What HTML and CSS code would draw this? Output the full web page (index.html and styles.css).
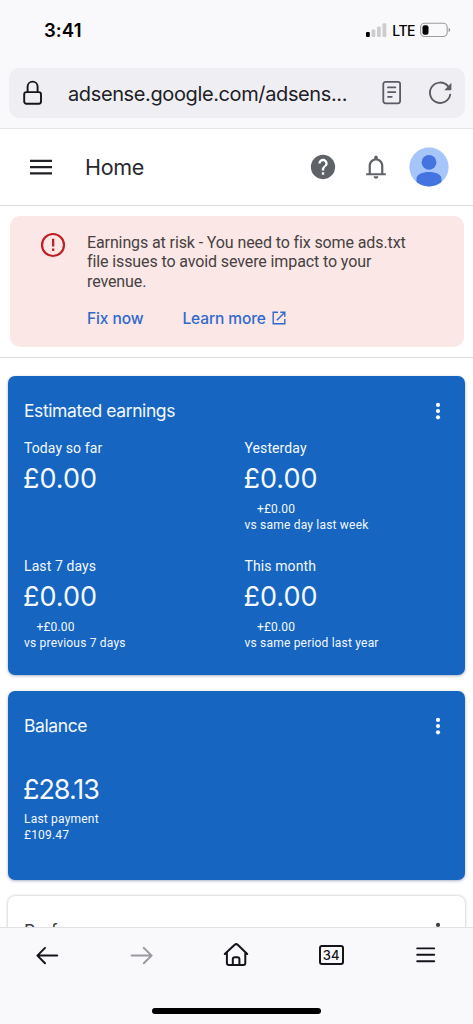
FILE: index.html
```html
<!DOCTYPE html>
<html lang="en">
<head>
<meta charset="utf-8">
<meta name="viewport" content="width=device-width, initial-scale=1">
<title>Home - AdSense</title>
<link rel="stylesheet" href="styles.css">
</head>
<body>
<div class="screen">
  <div class="chrome">
    <div class="status">
      <span class="time">3:41</span>
      <div class="signals">
        <svg width="22" height="16" viewBox="0 0 22 16"><rect x="1" y="10" width="3.8" height="5" rx="1"/><g fill="#cdcdd0"><rect x="6.5" y="7.5" width="3.8" height="7.5" rx="1"/><rect x="12" y="4.5" width="3.8" height="10.5" rx="1"/><rect x="17.5" y="1.2" width="3.8" height="13.8" rx="1"/></g></svg>
        <span class="lte">LTE</span>
        <svg width="31" height="16" viewBox="0 0 31 16"><rect x=".6" y="1.3" width="26.6" height="13.2" rx="4" fill="none" stroke="#9d9da0" stroke-width="1.1"/><rect x="2.5" y="3.2" width="6" height="9.6" rx="2"/><path d="M28.7 5.8v4.2q1.5-.8 1.5-2.1t-1.5-2.1z" fill="#8c8c90"/></svg>
      </div>
    </div>
    <div class="urlbar">
      <svg class="lock" width="20" height="26" viewBox="0 0 20 26" fill="none" stroke="#15141a" stroke-width="1.9"><rect x="1.2" y="12.1" width="16.8" height="11.6" rx="2.2"/><path d="M4.6 12V6.6a5 5 0 0 1 10 0V12"/></svg>
      <span class="url">adsense.google.com/adsens...</span>
      <svg class="reader" width="20" height="26" viewBox="0 0 20 26" fill="none" stroke="#5b5b66" stroke-width="1.8" stroke-linecap="round"><rect x="1.3" y="1.9" width="16.8" height="21.4" rx="2.2"/><path d="M6 7.4h7.3M6 12.1h7.3M6 16.8h3.8"/></svg>
      <svg class="reload" width="26" height="26" viewBox="0 0 26 26"><path d="M23.2 14.6A10.2 10.2 0 1 1 20.8 6" fill="none" stroke="#5b5b66" stroke-width="1.9" stroke-linecap="round"/><path d="M24.4 2.8v6.6q0 .8-.8.8h-6.3z" fill="#5b5b66"/></svg>
    </div>
  </div>

  <header class="appbar">
    <svg class="menu" width="24" height="18" viewBox="0 0 24 18" stroke="#202124" stroke-width="2.2"><path d="M1 2.8h22M1 9.1h22M1 15.4h22"/></svg>
    <h1>Home</h1>
    <svg class="help" width="28" height="28" viewBox="0 0 24 24" fill="#5f6368"><path d="M12 1.6a10.4 10.4 0 1 0 0 20.8 10.4 10.4 0 0 0 0-20.8zm1 17h-2v-2h2zm2.1-7.75-.9.92c-.72.73-1.2 1.33-1.2 3.23h-2v-.5c0-1.1.45-2.1 1.17-2.83l1.24-1.26A2 2 0 1 0 10 9H8a4 4 0 1 1 8 0c0 .88-.36 1.68-.9 2.25z"/></svg>
    <svg class="bell" width="28" height="28" viewBox="0 0 24 24" fill="#5f6368"><path d="M12 22c1.1 0 2-.9 2-2h-4c0 1.1.9 2 2 2zM18.3 17.3v-6.3c0-3.07-1.93-5.64-4.8-6.32V3.7a1.5 1.5 0 0 0-3 0v.98C7.64 5.36 5.7 7.92 5.7 11v6.3H3.6V19h16.8v-1.7zm-1.9 0H7.6v-6.3c0-2.48 1.91-4.6 4.4-4.6s4.4 2.12 4.4 4.6z"/></svg>
    <svg class="avatar" width="40" height="40" viewBox="0 0 40 40"><defs><clipPath id="face"><circle cx="20" cy="20" r="19.6"/></clipPath></defs><circle cx="20" cy="20" r="19.6" fill="#a6c5fb"/><g fill="#4374e0" clip-path="url(#face)"><circle cx="20" cy="15.3" r="7.4"/><path d="M7.5 40v-8.2C7.5 27.4 13 25 20 25s12.5 2.4 12.5 6.8V40z"/></g></svg>
  </header>

  <section class="notice">
    <div class="alert">
      <svg class="warn" width="26" height="26" viewBox="0 0 26 26"><circle cx="13" cy="13" r="11" fill="none" stroke="#bf2026" stroke-width="2.2"/><path d="M12 6.8h2.3v7.7H12zM12 16.6h2.3v2.3H12z" fill="#bf2026"/></svg>
      <div class="alert-body">
        <p>Earnings at risk - You need to fix some ads.txt<br>file issues to avoid severe impact to your<br>revenue.</p>
        <div class="actions"><a>Fix now</a><a class="more">Learn more<svg width="14" height="14" viewBox="0 0 14 14" fill="none" stroke="#3069cb" stroke-width="1.4"><path d="M6 1.2H1.2v11.6h11.6V8M8.3 1.2h4.5v4.5M12.6 1.4 4.8 9.2"/></svg></a></div>
      </div>
    </div>
  </section>

  <main class="cards">
    <section class="card blue earnings">
      <div class="card-head"><h2>Estimated earnings</h2><svg class="dots" width="6" height="18" viewBox="0 0 6 18"><circle cx="3" cy="2.9" r="2.1"/><circle cx="3" cy="9.1" r="2.1"/><circle cx="3" cy="15.3" r="2.1"/></svg></div>
      <div class="grid">
        <div class="metric"><div class="label">Today so far</div><div class="value">£0.00</div></div>
        <div class="metric"><div class="label">Yesterday</div><div class="value">£0.00</div><div class="delta">+£0.00</div><div class="sub">vs same day last week</div></div>
        <div class="metric"><div class="label">Last 7 days</div><div class="value">£0.00</div><div class="delta">+£0.00</div><div class="sub">vs previous 7 days</div></div>
        <div class="metric"><div class="label">This month</div><div class="value">£0.00</div><div class="delta">+£0.00</div><div class="sub">vs same period last year</div></div>
      </div>
    </section>
    <section class="card blue balance">
      <div class="card-head"><h2>Balance</h2><svg class="dots" width="6" height="18" viewBox="0 0 6 18"><circle cx="3" cy="2.9" r="2.1"/><circle cx="3" cy="9.1" r="2.1"/><circle cx="3" cy="15.3" r="2.1"/></svg></div>
      <div class="value amount">£28.13</div>
      <div class="sub">Last payment</div>
      <div class="sub">£109.47</div>
    </section>
    <section class="card white">
      <div class="card-head"><h2>Performance</h2><svg class="dots" width="6" height="18" viewBox="0 0 6 18"><circle cx="3" cy="2.9" r="2.1"/><circle cx="3" cy="9.1" r="2.1"/><circle cx="3" cy="15.3" r="2.1"/></svg></div>
    </section>
  </main>

  <footer class="bottom">
    <nav class="tabs">
      <svg width="24" height="20" viewBox="0 0 24 20" fill="none" stroke="#15141a" stroke-width="2" stroke-linecap="round" stroke-linejoin="round"><path d="M22.2 10.6H2.4M10 2.9 2.4 10.6l7.6 7.7"/></svg>
      <svg width="24" height="20" viewBox="0 0 24 20" fill="none" stroke="#98989e" stroke-width="2" stroke-linecap="round" stroke-linejoin="round"><path d="M1.6 10.6h20M13.8 2.9l7.8 7.7-7.8 7.7"/></svg>
      <svg class="home" width="28" height="26" viewBox="0 0 28 26" fill="none" stroke="#15141a" stroke-width="2" stroke-linecap="round" stroke-linejoin="round"><path d="M2.8 12 12.7 2.8q1.5-1.3 3 0L25.2 12M4.9 10.5v10.4q0 2 2 2h14.4q2 0 2-2V10.5M10.8 22.6v-5.4q0-2 2-2h2.6q2 0 2 2v5.4"/></svg>
      <span class="count">34</span>
      <svg class="burger" width="20" height="16" viewBox="0 0 20 16" stroke="#15141a" stroke-width="1.9" stroke-linecap="round"><path d="M1.2 1.4h17M1.2 7.8h17M1.2 14.2h17"/></svg>
    </nav>
    <div class="indicator"></div>
  </footer>
</div>
</body>
</html>
```
FILE: styles.css
```css
* { box-sizing: border-box; }
body { margin: 0; background: #fff; font-family: Roboto, sans-serif; }
h1, h2, p { margin: 0; font-weight: 400; }
svg { display: block; flex: none; }
.screen { width: 473px; height: 1024px; overflow: hidden; display: flex; flex-direction: column; background: #fff; }

.chrome { flex: none; height: 129px; background: #f9f9fc; border-bottom: 1px solid #e7e7ea; }
.status { height: 68px; padding: 18px 22px 0 44px; display: flex; justify-content: space-between; align-items: flex-start; font-family: Inter, sans-serif; }
.time { font-size: 18.5px; line-height: 25px; font-weight: 600; letter-spacing: .1px; }
.signals { display: flex; align-items: center; height: 24px; }
.lte { font-size: 14px; font-weight: 500; margin: 0 5px 0 5px; letter-spacing: -.5px; }
.urlbar { margin: 0 8px 0 9px; height: 50px; border-radius: 10px; background: #efeff3; display: flex; align-items: center; padding: 0 12px 0 14px; }
.url { margin-left: 25px; flex: 1; font-family: Inter, sans-serif; font-size: 20px; line-height: 24px; padding-top: 1px; letter-spacing: -.38px; color: #202026; white-space: nowrap; }
.reader { margin-right: 25px; }

.appbar { flex: none; height: 77px; border-bottom: 1px solid #d9d9dc; display: flex; align-items: center; padding: 0 24px 0 29px; }
.appbar h1 { margin-left: 32px; flex: 1; font: 400 21.5px Inter, sans-serif; color: #28292c; letter-spacing: -.3px; }
.help { margin-right: 25px; }
.bell { margin-right: 19px; }

.notice { flex: none; height: 152px; padding: 10px 9px 0 10px; border-bottom: 1px solid #d9d9dc; }
.alert { height: 131px; border-radius: 10px; background: #fae7e6; padding: 16px 0 0 30px; display: flex; align-items: flex-start; }
.alert-body { margin-left: 21px; }
.alert p { padding-top: 1px; font-size: 16px; line-height: 19.3px; letter-spacing: -.11px; color: #47413f; white-space: nowrap; }
.actions { display: flex; gap: 39px; margin-top: 18.1px; font: 500 15.5px/20px Inter, sans-serif; letter-spacing: -.1px; color: #3069cb; }
.more { display: flex; align-items: center; gap: 6.5px; }
.more svg { margin-bottom: 1px; }

.cards { flex: 1; min-height: 0; overflow: hidden; padding: 18px 8px 0; display: flex; flex-direction: column; gap: 16px; }
.card { flex: none; border-radius: 7px; padding: 17px 16px 0; box-shadow: 0 1px 3px rgba(40, 60, 110, .4); }
.blue { background: #1665c1; color: #f4f9ff; }
.earnings { height: 299px; }
.balance { height: 189px; }
.white { height: 120px; background: #fff; color: #3c4043; box-shadow: 0 0 3px rgba(0, 0, 0, .3); }
.card-head { display: flex; justify-content: space-between; align-items: center; height: 36px; padding-right: 8.5px; }
.card-head h2 { font: 400 17.5px/24px Inter, sans-serif; letter-spacing: -.4px; }
.dots { fill: currentColor; }
.grid { display: grid; grid-template-columns: 220.5px 1fr; grid-auto-rows: 118px; padding-top: 10px; }
.label { font-size: 14px; line-height: 18px; letter-spacing: .1px; }
.value { font: 400 27px/38px Inter, sans-serif; margin: 3px 0 0 -1px; letter-spacing: 0; }
.delta { font-size: 12px; line-height: 16px; margin: 3px 0 0 12.5px; letter-spacing: .15px; }
.sub { font-size: 12px; line-height: 16px; letter-spacing: .2px; white-space: nowrap; }
.amount { margin: 27px 0 2px -1px; letter-spacing: -1.05px; }

.bottom { flex: none; height: 97px; background: #f9f9fc; border-top: 1px solid #e2e2e6; display: flex; flex-direction: column; align-items: center; }
.tabs { align-self: stretch; height: 55px; display: grid; grid-template-columns: repeat(5, 1fr); justify-items: center; align-items: center; padding-bottom: 1px; }
.count { width: 25px; height: 20px; border: 2px solid #15141a; border-radius: 3px; font: 500 13px/16px Inter, sans-serif; text-align: center; color: #15141a; }
.indicator { width: 169px; height: 6px; margin-top: 25px; border-radius: 3px; background: #000; }
```
